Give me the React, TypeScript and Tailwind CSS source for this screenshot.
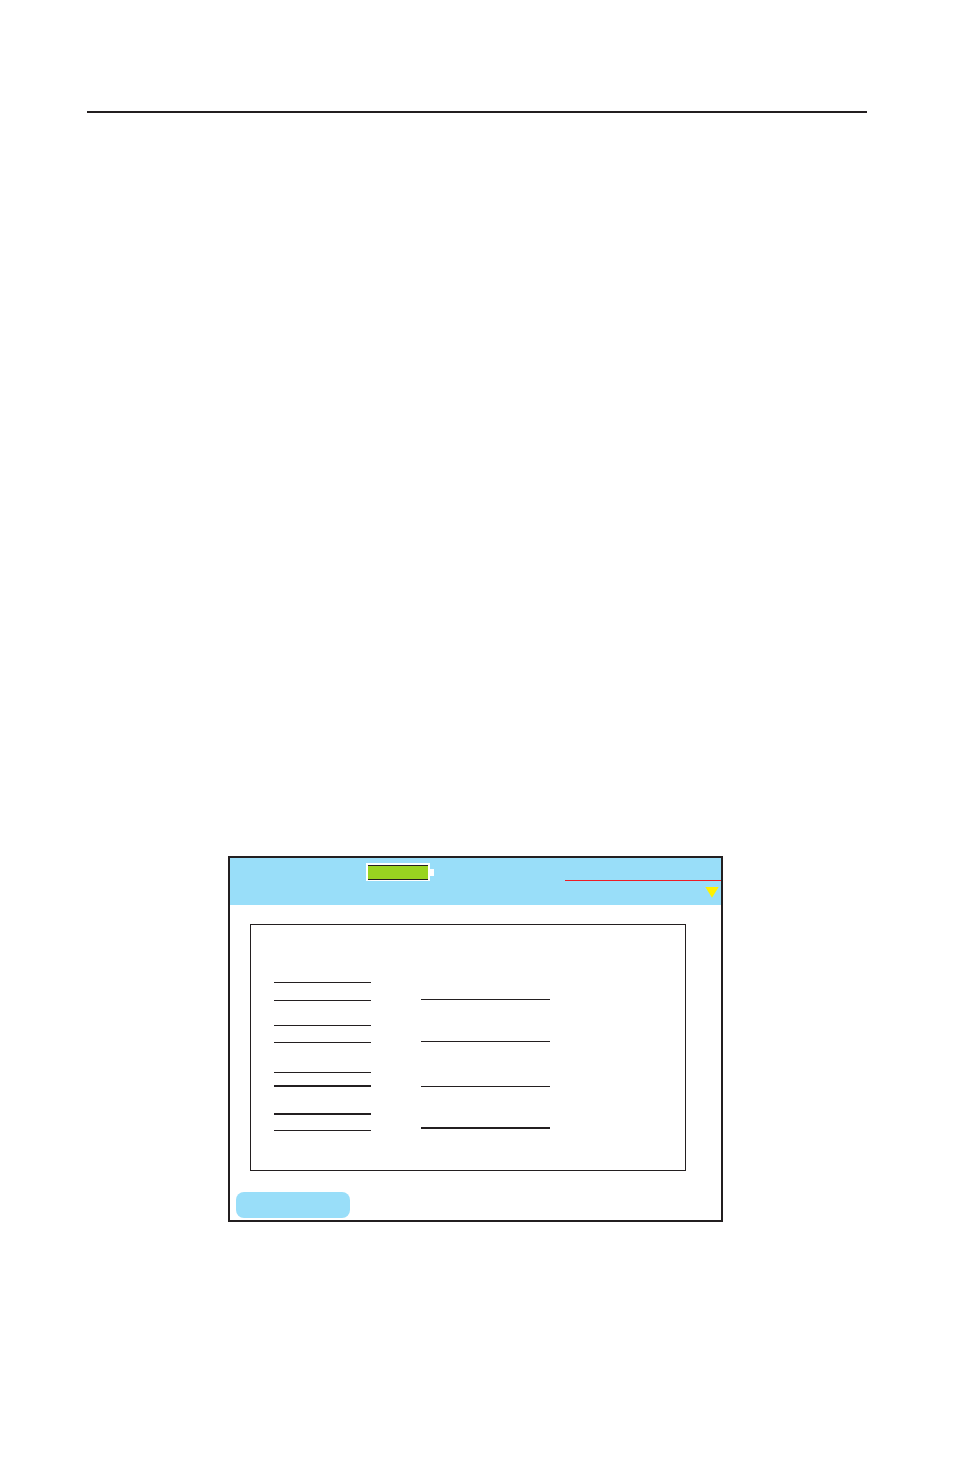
const readings = [
  "h-[19px] border-y",
  "mt-6 h-[18px] border-y",
  "mt-[29px] h-[15px] border-t border-b-2",
  "mt-[26px] h-[18px] border-t-2 border-b",
];

const values = [
  "h-px",
  "mt-[41px] h-px",
  "mt-11 h-px",
  "mt-10 h-0.5",
];

function Battery() {
  return (
    <div className="ml-[136px] mt-[5px] flex h-[18px] items-center">
      <div className="h-[18px] w-16 border-2 border-b border-white">
        <div className="h-full border-y border-[#231f20] bg-[#99d420]" />
      </div>
      <div className="h-[7px] w-1 bg-white" />
    </div>
  );
}

function ScreenHeader() {
  return (
    <header className="flex h-[47px] items-start justify-between bg-[#99def9]">
      <Battery />
      <div className="mt-[22px] flex w-[156px] flex-col items-end border-t border-[#ed1c24] pr-0.5 pt-1.5">
        <svg width="14" height="11" viewBox="0 0 14 11" aria-hidden="true">
          <path d="M0.3 0H13.7L7 10.7Z" fill="#fff200" />
        </svg>
      </div>
    </header>
  );
}

export default function App() {
  return (
    <main className="min-h-screen bg-white px-[87px] pt-[111px] font-['Liberation_Sans',sans-serif]">
      <hr className="border-t-2 border-[#231f20]" />

      <section className="ml-[141px] mr-36 mt-[743px] border-2 border-[#231f20] bg-white">
        <ScreenHeader />

        <div className="ml-5 mr-[35px] mt-[19px] flex gap-[50px] border border-[#231f20] pb-[39px] pl-[23px] pt-[57px]">
          {/* Measured fields */}
          <div className="w-[97px]">
            {readings.map((row) => (
              <div key={row} className={`border-[#231f20] ${row}`} />
            ))}
          </div>

          {/* Value lines */}
          <div className="w-[129px] pt-[17px]">
            {values.map((row) => (
              <div key={row} className={`bg-[#231f20] ${row}`} />
            ))}
          </div>
        </div>

        {/* Soft key */}
        <button type="button" className="mb-0.5 ml-1.5 mt-[21px] block h-[26px] w-[114px] rounded-lg bg-[#99def9]" />
      </section>
    </main>
  );
}
